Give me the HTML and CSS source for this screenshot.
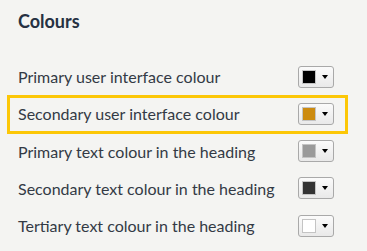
FILE: index.html
```html
<!DOCTYPE html>
<html>
<head>
<meta charset="utf-8">
<link rel="stylesheet" href="styles.css">
</head>
<body>
<div class="panel">
  <h2 class="title">Colours</h2>
  <div class="list">
    <div class="row">
      <span class="label">Primary user interface colour</span>
      <button class="picker"><span class="swatch" style="background:#000000"></span><span class="arrow"></span></button>
    </div>
    <div class="row focused">
      <span class="label">Secondary user interface colour</span>
      <button class="picker"><span class="swatch" style="background:#cc8b10"></span><span class="arrow"></span></button>
    </div>
    <div class="row">
      <span class="label">Primary text colour in the heading</span>
      <button class="picker"><span class="swatch" style="background:#9a9a9a"></span><span class="arrow"></span></button>
    </div>
    <div class="row">
      <span class="label">Secondary text colour in the heading</span>
      <button class="picker"><span class="swatch" style="background:#333333"></span><span class="arrow"></span></button>
    </div>
    <div class="row">
      <span class="label">Tertiary text colour in the heading</span>
      <button class="picker"><span class="swatch" style="background:#ffffff"></span><span class="arrow"></span></button>
    </div>
  </div>
</div>
</body>
</html>
```

FILE: styles.css
```css
html, body {
  margin: 0;
  padding: 0;
  background: #f4f4f2;
}
body {
  width: 367px;
  height: 251px;
  overflow: hidden;
  font-family: Lato, "Noto Sans", sans-serif;
  color: #2e3440;
}
.panel {
  padding: 9px 0 0 0;
}
.title {
  margin: 0 0 0 18px;
  font-size: 18px;
  font-weight: 700;
  line-height: 24px;
  color: #263142;
}
.list {
  margin-top: 25px;
}
.row {
  position: relative;
  height: 37.25px;
  display: flex;
  align-items: center;
  justify-content: space-between;
  padding: 0 33px 0 18px;
}
.row.focused::after {
  content: "";
  position: absolute;
  top: 0;
  bottom: -1.5px;
  left: 7px;
  right: 19px;
  border: 3px solid #fcc707;
  pointer-events: none;
}
.label {
  font-size: 16px;
  color: #333a45;
}
.picker {
  width: 36px;
  height: 22px;
  padding: 0 0 0 3px;
  margin: 0;
  display: flex;
  align-items: center;
  border: 1px solid #a9a9a9;
  border-radius: 3px;
  background: linear-gradient(#fbfbfb, #e9e9e9);
  box-sizing: border-box;
}
.swatch {
  width: 14px;
  height: 14px;
  border: 1px solid #c4c4c4;
  box-sizing: border-box;
}
.arrow {
  margin-left: 6px;
  width: 0;
  height: 0;
  border-left: 3.5px solid transparent;
  border-right: 3.5px solid transparent;
  border-top: 4px solid #000;
}
```
